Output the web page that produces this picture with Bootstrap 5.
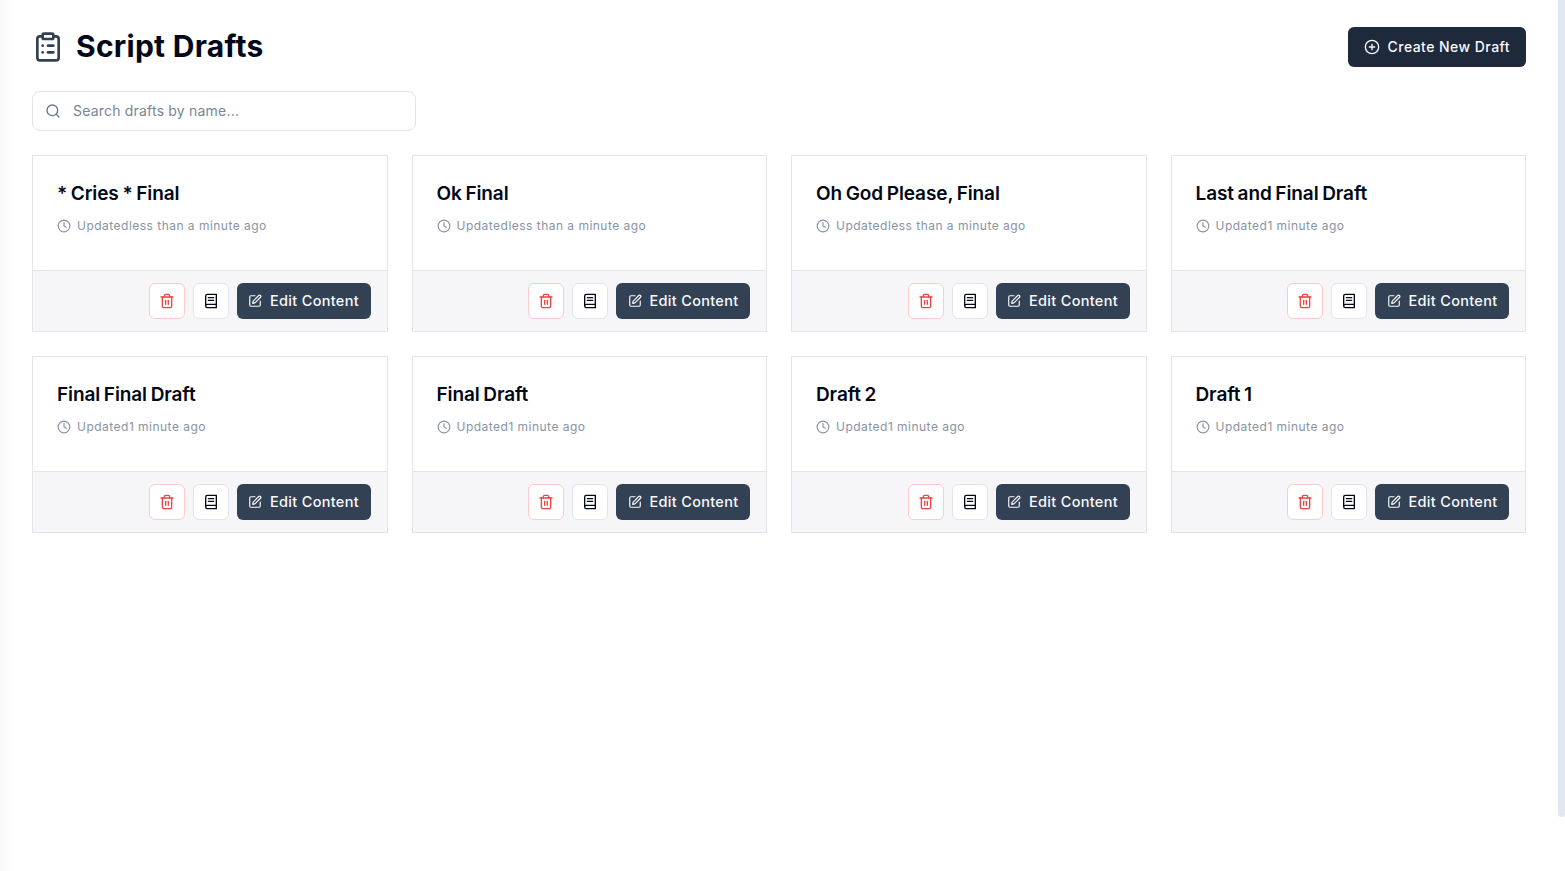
<!DOCTYPE html>
<html lang="en">
<head>
    <meta charset="UTF-8" />
    <meta name="viewport" content="width=device-width, initial-scale=1.0" />
    <title>Script Drafts</title>
    <link href="https://cdn.jsdelivr.net/npm/bootstrap@5.3.2/dist/css/bootstrap.min.css" rel="stylesheet" />
    <style>
        body { font-family: "Inter", "Liberation Sans", sans-serif; background: linear-gradient(to right, #f9f9f9, #fff 14px); color: #020817; min-height: 871px; }
        svg { fill: none; stroke: currentColor; stroke-width: 2; stroke-linecap: round; stroke-linejoin: round; flex-shrink: 0; }
        .page-wrap { padding: 27px 39px 0 32px; }
        .page-head { height: 40px; }
        .page-title { font-size: 30px; font-weight: 700; letter-spacing: 0.27px; line-height: 38px; padding-bottom: 2px; color: #020817; }
        .title-icon { color: #334155; }
        .btn-create { height: 40px; padding: 0 16px; background: #1e293b; color: #f8fafc; font-size: 14px; font-weight: 500; letter-spacing: 0.45px; border: 0; border-radius: 6px; }
        .btn-create:hover { background: #1e293b; color: #f8fafc; }
        .btn-create span { padding-bottom: 1px; }
        .search-box { width: 384px; height: 40px; background: #fff; border: 1px solid #e2e4ea; border-radius: 8px; padding: 0 12px; color: #64748b; }
        .search-box input { border: 0; outline: 0; padding: 0 0 2px; width: 100%; font-size: 14px; letter-spacing: 0.2px; color: #020817; }
        .search-box input::placeholder { color: #7a8494; opacity: 1; }
        .draft-card { border: 1px solid #e4e5ea; border-radius: 0; height: 177px; }
        .draft-card .card-body { padding: 24px; }
        .draft-title { font-size: 19px; font-weight: 600; line-height: 28px; letter-spacing: -0.1px; word-spacing: -1px; color: #020817; margin: 0 0 8px; }
        .draft-meta { gap: 6px; font-size: 12px; line-height: 20px; letter-spacing: 0.48px; color: #8a93a3; }
        .draft-foot { height: 61px; background: #f6f6f9; border-top: 1px solid #e4e5ea; border-radius: 0 !important; padding: 12px 16px; }
        .btn-square { width: 36px; height: 36px; padding: 0; background: #fff; border-radius: 6px; }
        .btn-del { border: 1px solid #fecaca; color: #ef4444; }
        .btn-book { border: 1px solid #e4e5ea; color: #020817; }
        .btn-edit { height: 36px; width: 134px; padding: 0; background: #334155; color: #f8fafc; border: 0; border-radius: 6px; font-size: 14.5px; font-weight: 500; letter-spacing: 0.3px; }
        .btn-edit:hover { background: #334155; color: #f8fafc; }
        .scroll-thumb { position: fixed; top: 0; right: 0; width: 7px; height: 817px; background: #e2e8f0; border-radius: 0 0 4px 4px; }
    </style>
</head>
<body>
<svg width="0" height="0" class="d-none">
    <symbol id="i-clipboard" viewBox="0 0 24 24"><rect x="8" y="2" width="8" height="4" rx="1"/><path d="M16 4h2a2 2 0 0 1 2 2v14a2 2 0 0 1-2 2H6a2 2 0 0 1-2-2V6a2 2 0 0 1 2-2h2"/><path d="M12 11h4"/><path d="M12 16h4"/><path d="M8 11h.01"/><path d="M8 16h.01"/></symbol>
    <symbol id="i-plus" viewBox="0 0 24 24"><circle cx="12" cy="12" r="10"/><path d="M8 12h8"/><path d="M12 8v8"/></symbol>
    <symbol id="i-search" viewBox="0 0 24 24"><circle cx="11" cy="11" r="8"/><path d="m21 21-4.3-4.3"/></symbol>
    <symbol id="i-clock" viewBox="0 0 24 24"><circle cx="12" cy="12" r="10"/><polyline points="12 6 12 12 16 14"/></symbol>
    <symbol id="i-trash" viewBox="0 0 24 24"><path d="M3 6h18"/><path d="M19 6v14c0 1-1 2-2 2H7c-1 0-2-1-2-2V6"/><path d="M8 6V4c0-1 1-2 2-2h4c1 0 2 1 2 2v2"/><path d="M10 11v6"/><path d="M14 11v6"/></symbol>
    <symbol id="i-book" viewBox="0 0 24 24"><path d="M4 19.5v-15A2.5 2.5 0 0 1 6.5 2H20v20H6.5a2.5 2.5 0 0 1 0-5H20"/><path d="M8 7h8"/><path d="M8 11h8"/></symbol>
    <symbol id="i-edit" viewBox="0 0 24 24"><path d="M12 3H5a2 2 0 0 0-2 2v14a2 2 0 0 0 2 2h14a2 2 0 0 0 2-2v-7"/><path d="M18.375 2.625a1 1 0 0 1 3 3l-9.013 9.014a2 2 0 0 1-.853.505l-2.873.84a.5.5 0 0 1-.62-.62l.84-2.873a2 2 0 0 1 .506-.852z"/></symbol>
</svg>

<div class="page-wrap">
    <div class="page-head d-flex justify-content-between align-items-center mb-4">
        <div class="d-flex align-items-center gap-2">
            <svg class="title-icon" width="32" height="32"><use href="#i-clipboard"/></svg>
            <h1 class="page-title m-0 ms-1">Script Drafts</h1>
        </div>
        <button class="btn btn-create d-flex align-items-center gap-2">
            <svg width="16" height="16"><use href="#i-plus"/></svg><span>Create New Draft</span>
        </button>
    </div>

    <div class="search-box d-flex align-items-center gap-2 mb-4">
        <svg width="16" height="16"><use href="#i-search"/></svg>
        <input type="text" class="ms-1" placeholder="Search drafts by name..." />
    </div>

    <div class="row row-cols-4 g-4" id="drafts"></div>
</div>
<div class="scroll-thumb"></div>

<script>
    const drafts = [
        ["* Cries * Final", "less than a minute ago"],
        ["Ok Final", "less than a minute ago"],
        ["Oh God Please, Final", "less than a minute ago"],
        ["Last and Final Draft", "1 minute ago"],
        ["Final Final Draft", "1 minute ago"],
        ["Final Draft", "1 minute ago"],
        ["Draft 2", "1 minute ago"],
        ["Draft 1", "1 minute ago"]
    ];
    document.getElementById("drafts").innerHTML = drafts.map(([name, time]) => `
        <div class="col">
            <div class="card draft-card">
                <div class="card-body">
                    <h5 class="draft-title">${name}</h5>
                    <div class="draft-meta d-flex align-items-center">
                        <svg width="14" height="14"><use href="#i-clock"/></svg><span>Updated${time}</span>
                    </div>
                </div>
                <div class="card-footer draft-foot d-flex justify-content-end gap-2">
                    <button class="btn btn-square btn-del d-flex align-items-center justify-content-center"><svg width="16" height="16"><use href="#i-trash"/></svg></button>
                    <button class="btn btn-square btn-book d-flex align-items-center justify-content-center"><svg width="16" height="16"><use href="#i-book"/></svg></button>
                    <button class="btn btn-edit d-flex align-items-center justify-content-center gap-2"><svg width="14" height="14"><use href="#i-edit"/></svg>Edit Content</button>
                </div>
            </div>
        </div>`).join("");
</script>
<script src="https://cdn.jsdelivr.net/npm/bootstrap@5.3.2/dist/js/bootstrap.bundle.min.js"></script>
</body>
</html>
